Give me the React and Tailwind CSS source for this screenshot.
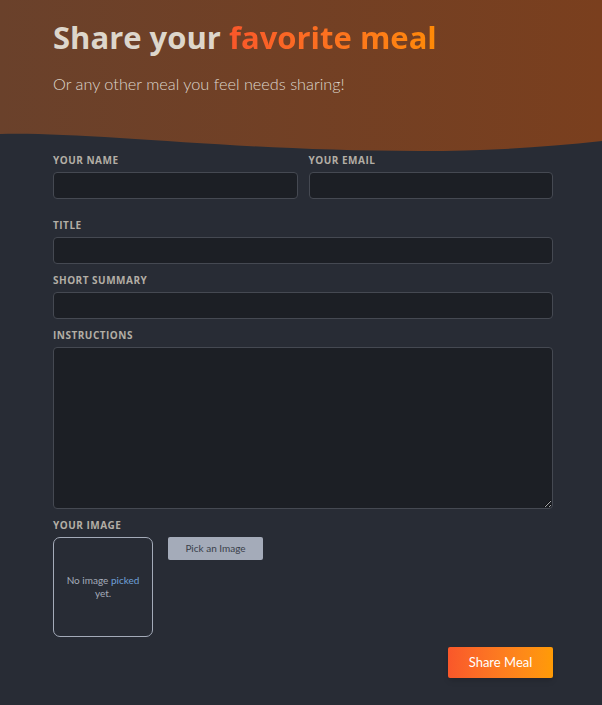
import { useState } from "react";

const heading = { fontFamily: "'Open Sans', 'Liberation Sans', sans-serif" };
const body = { fontFamily: "Lato, 'Noto Sans', sans-serif" };

function Label({ children, htmlFor }) {
  return (
    <label
      htmlFor={htmlFor}
      className="block text-[10px] font-bold uppercase tracking-[0.5px] text-[#b3aea5] mb-[5px] leading-[14px]"
      style={heading}
    >
      {children}
    </label>
  );
}

const inputCls =
  "block w-full h-[27px] rounded-[4px] border border-[#454952] bg-[#1c1f25] text-[#ddd6cb] px-2 text-sm outline-none";

export default function App() {
  const [picked] = useState(null);

  return (
    <div className="relative min-h-[705px] bg-[#282c35] overflow-hidden" style={body}>
      {/* BACKGROUND WAVE */}
      <svg
        className="absolute top-0 left-0"
        width="602"
        height="160"
        viewBox="0 0 602 160"
        preserveAspectRatio="none"
      >
        <defs>
          <linearGradient id="brown" x1="0" y1="0" x2="1" y2="0">
            <stop offset="0%" stopColor="#6a412b" />
            <stop offset="100%" stopColor="#7a3f1e" />
          </linearGradient>
        </defs>
        <path
          d="M0 0 H602 V141 C540 148 480 151 420 151 C300 151 200 143 120 138 C70 135 30 133 0 134 Z"
          fill="url(#brown)"
        />
      </svg>

      <div className="relative w-[500px] ml-[53px]">
        {/* HEADER */}
        <header className="pt-[17px] pb-[54px]">
          <h1 className="text-[31px] font-bold leading-[40px] text-[#ddd6cb]" style={heading}>
            Share your{" "}
            <span className="bg-gradient-to-r from-[#f9572a] to-[#ff8a05] bg-clip-text text-transparent">
              favorite meal
            </span>
          </h1>
          <p className="mt-[17px] text-[16.3px] leading-[20px] text-[#ddd6cb] font-light">
            Or any other meal you feel needs sharing!
          </p>
        </header>

        {/* FORM */}
        <form className="pt-[5px]">
          <div className="grid grid-cols-2 gap-[11px]">
            <div>
              <Label htmlFor="name">Your name</Label>
              <input id="name" className={inputCls} />
            </div>
            <div>
              <Label htmlFor="email">Your email</Label>
              <input id="email" className={inputCls} />
            </div>
          </div>

          <div className="mt-[19px]">
            <Label htmlFor="title">Title</Label>
            <input id="title" className={inputCls} />
          </div>

          <div className="mt-[9px]">
            <Label htmlFor="summary">Short Summary</Label>
            <input id="summary" className={inputCls} />
          </div>

          <div className="mt-[9px]">
            <Label htmlFor="instructions">Instructions</Label>
            <textarea
              id="instructions"
              className="block w-full h-[162px] rounded-[4px] border border-[#454952] bg-[#1c1f25] text-[#ddd6cb] px-2 text-sm outline-none"
            />
          </div>

          <div className="mt-[9px]">
            <Label>Your image</Label>
            <div className="flex items-start gap-[15px]">
              <div className="w-[100px] h-[100px] rounded-[7px] border border-[#a4abb9] flex items-center justify-center text-center">
                {!picked && (
                  <p className="text-[10px] leading-[13px] text-[#a4abb9] px-2">
                    No image <span className="text-[#6fa0d8]">picked</span> yet.
                  </p>
                )}
              </div>
              <button
                type="button"
                className="h-[23px] w-[95px] bg-[#a4abb9] text-[#3a3f4a] text-[10px] rounded-[2px]"
              >
                Pick an Image
              </button>
            </div>
          </div>

          <div className="flex justify-end mt-[10px]">
            <button
              type="button"
              className="h-[31px] w-[105px] rounded-[2px] bg-gradient-to-r from-[#f9572a] to-[#ff9b05] text-white text-[13px] shadow-md"
            >
              Share Meal
            </button>
          </div>
        </form>
      </div>
    </div>
  );
}
